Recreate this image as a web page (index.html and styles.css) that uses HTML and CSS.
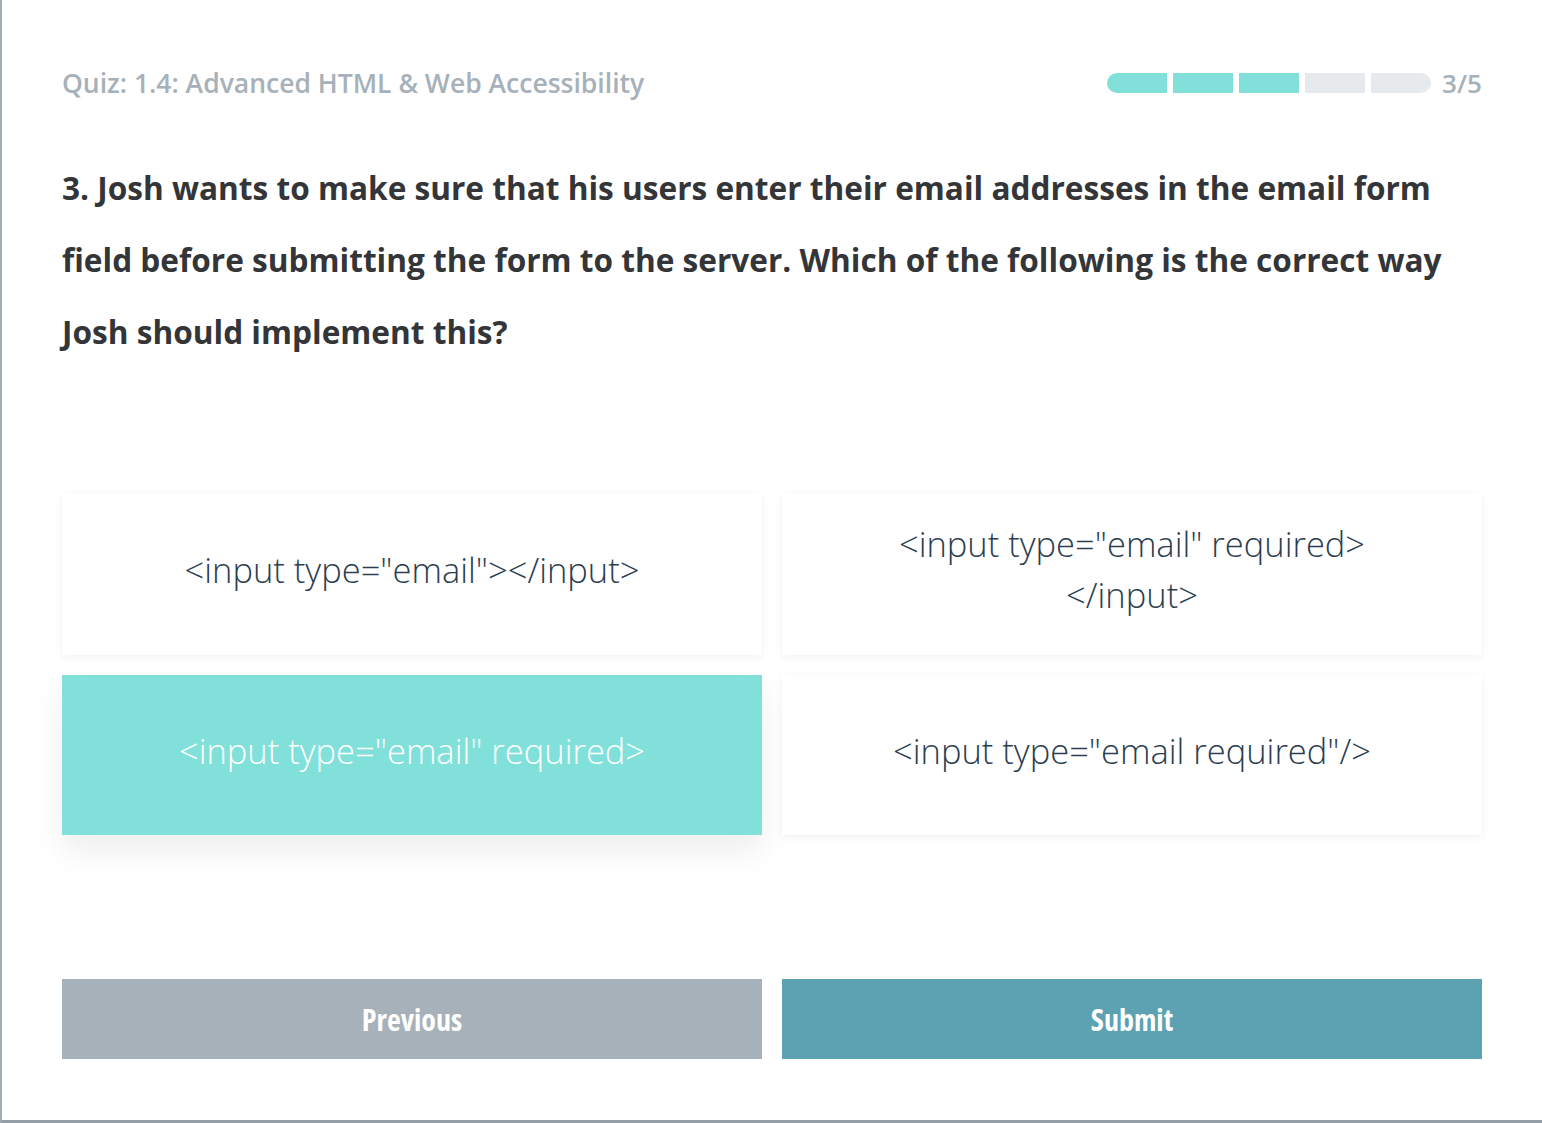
FILE: index.html
```html
<!DOCTYPE html>
<html lang="en">
<head>
<meta charset="utf-8">
<title>Quiz</title>
<link rel="stylesheet" href="styles.css">
</head>
<body>
<div class="page">
  <header class="quiz-header">
    <div class="quiz-title">Quiz: 1.4: Advanced HTML &amp; Web Accessibility</div>
    <div class="progress">
      <div class="progress-bar">
        <span class="seg done"></span>
        <span class="seg done"></span>
        <span class="seg done"></span>
        <span class="seg"></span>
        <span class="seg"></span>
      </div>
      <span class="progress-count">3/5</span>
    </div>
  </header>

  <h1 class="question">3. Josh wants to make sure that his users enter their email addresses in the email form<br>field before submitting the form to the server. Which of the following is the correct way<br>Josh should implement this?</h1>

  <div class="options">
    <div class="option">&lt;input type="email"&gt;&lt;/input&gt;</div>
    <div class="option">&lt;input type="email" required&gt;<br>&lt;/input&gt;</div>
    <div class="option selected">&lt;input type="email" required&gt;</div>
    <div class="option">&lt;input type="email required"/&gt;</div>
  </div>

  <div class="actions">
    <button class="btn btn-prev">Previous</button>
    <button class="btn btn-submit">Submit</button>
  </div>
</div>
</body>
</html>
```
FILE: styles.css
```css
html, body {
  margin: 0;
  padding: 0;
  background: #ffffff;
}

.page {
  box-sizing: border-box;
  height: 1123px;
  border-left: 2px solid #a3adb5;
  border-bottom: 3px solid #939da6;
  padding: 63px 60px 0 60px;
  font-family: "Open Sans", "Liberation Sans", sans-serif;
  font-stretch: 100%;
}

.quiz-header {
  display: flex;
  align-items: center;
  justify-content: space-between;
  height: 40px;
}

.quiz-title {
  font-size: 26.5px;
  font-weight: 600;
  color: #a7b1b9;
}

.progress {
  display: flex;
  align-items: center;
  gap: 11px;
}

.progress-bar {
  display: flex;
  gap: 6px;
}

.seg {
  display: block;
  width: 60px;
  height: 20px;
  background: #e7eaed;
}

.seg:first-child {
  border-radius: 10px 0 0 10px;
}

.seg:last-child {
  border-radius: 0 10px 10px 0;
}

.seg.done {
  background: #82e0da;
}

.progress-count {
  font-size: 26px;
  font-weight: 600;
  color: #a7b1b9;
}

.question {
  margin: 49px 0 0 0;
  font-size: 31.6px;
  line-height: 72px;
  font-weight: 700;
  color: #333538;
}

.options {
  display: grid;
  grid-template-columns: 700px 700px;
  gap: 20px;
  margin-top: 125px;
}

.option {
  box-sizing: border-box;
  min-height: 160px;
  padding: 25px 40px 35px;
  display: flex;
  align-items: center;
  justify-content: center;
  text-align: center;
  font-size: 34.5px;
  line-height: 51px;
  font-weight: 300;
  color: #2b3e50;
  background: #ffffff;
  box-shadow: 0 2px 8px rgba(0, 0, 0, 0.06);
}

.option.selected {
  background: #82e0da;
  color: #ffffff;
  box-shadow: 0 16px 30px rgba(0, 0, 0, 0.07);
}

.actions {
  display: grid;
  grid-template-columns: 700px 700px;
  gap: 20px;
  margin-top: 144px;
}

.btn {
  height: 80px;
  border: none;
  font-family: inherit;
  font-stretch: 75%;
  font-size: 30px;
  font-weight: 700;
  color: #ffffff;
  cursor: pointer;
}

.btn-prev {
  background: #a7b1b9;
}

.btn-submit {
  background: #5ca2b2;
}
```
